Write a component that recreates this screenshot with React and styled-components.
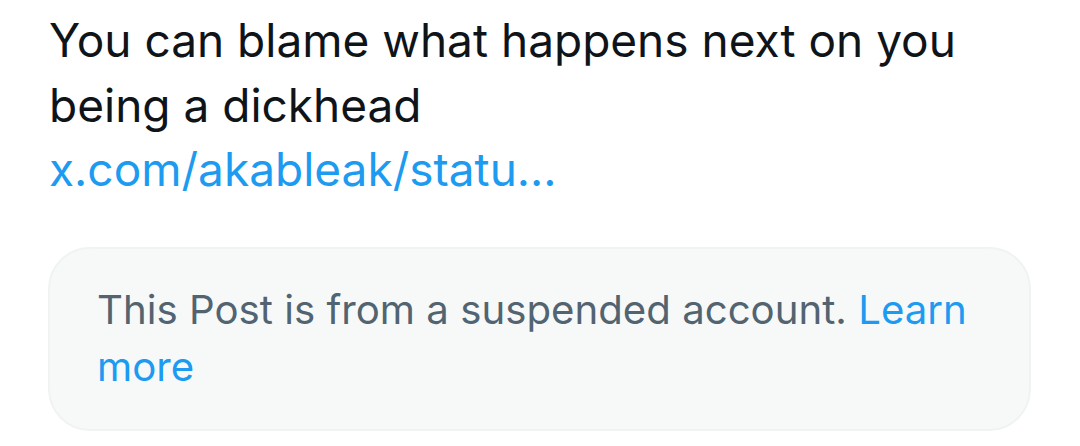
import React from "react";
import styled, { createGlobalStyle } from "styled-components";

const GlobalStyle = createGlobalStyle`
  html, body {
    margin: 0;
    padding: 0;
    background: #ffffff;
  }
  body {
    font-family: Inter, "Noto Sans", "Liberation Sans", sans-serif;
  }
`;

const Page = styled.div`
  width: 1080px;
  height: 446px;
  box-sizing: border-box;
  padding: 8px 49px 0 48px;
  overflow: hidden;
`;

const PostText = styled.div`
  font-size: 46px;
  line-height: 64.5px;
  color: #0f1419;
  padding-left: 1px;
`;

const Link = styled.a`
  color: #1d9bf0;
  text-decoration: none;
`;

const Notice = styled.div`
  margin-top: 45px;
  box-sizing: border-box;
  height: 184px;
  padding: 32px 40px 0 47px;
  background: #f7f9f9;
  border: 2px solid #eff3f4;
  border-radius: 42px;
  font-size: 40.2px;
  line-height: 57px;
  color: #536471;
`;

const App = () => {
  return (
    <Page>
      <GlobalStyle />
      <PostText>
        You can blame what happens next on you
        <br />
        being a dickhead
        <br />
        <Link href="#">x.com/akableak/statu...</Link>
      </PostText>
      <Notice>
        This Post is from a suspended account. <Link href="#">Learn</Link>
        <br />
        <Link href="#">more</Link>
      </Notice>
    </Page>
  );
};

export default App;
